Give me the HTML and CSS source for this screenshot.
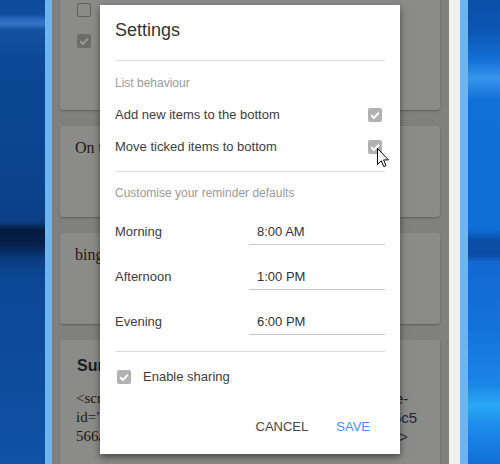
FILE: index.html
```html
<!DOCTYPE html>
<html lang="en">
<head>
<meta charset="utf-8">
<title>Settings</title>
<link rel="stylesheet" href="styles.css">
</head>
<body>
<div class="desk">
  <div class="wall wall-left"></div>
  <div class="edge"></div>
  <main class="app">
    <div class="cards">
      <section class="card card-list">
        <div class="todo"><span class="tick"></span></div>
        <div class="todo"><span class="tick done"><svg viewBox="0 0 14 14"><path d="M3.2 7.3 L5.9 10 L10.9 4.6" fill="none" stroke="#9a9a98" stroke-width="2"/></svg></span></div>
      </section>
      <section class="card card-note"><p>On the way home</p></section>
      <section class="card card-note"><p>bing search</p></section>
      <section class="card card-code">
        <h3>Surf links</h3>
        <div class="code-line"><span class="code-left">&lt;script async src</span><span class="code-right r1">e-</span></div>
        <div class="code-line"><span class="code-left">id="a51b</span><span class="code-right r2">5c5</span></div>
        <div class="code-line"><span class="code-left">566a07</span><span class="code-right r3">&gt;</span></div>
      </section>
    </div>
  </main>
  <div class="scrollbar"></div>
  <div class="edge edge-r"></div>
  <div class="wall wall-right"></div>
</div>

<div class="dialog" role="dialog" aria-label="Settings">
  <h2 class="dialog-title">Settings</h2>
  <hr class="rule">
  <div class="section-label">List behaviour</div>
  <div class="opt-rows">
    <label class="opt-row"><span>Add new items to the bottom</span><span class="check"><svg viewBox="0 0 14 14"><path d="M3.2 7.3 L5.9 10 L10.9 4.6" fill="none" stroke="#fff" stroke-width="2"/></svg></span></label>
    <label class="opt-row"><span>Move ticked items to bottom</span><span class="check"><svg viewBox="0 0 14 14"><path d="M3.2 7.3 L5.9 10 L10.9 4.6" fill="none" stroke="#fff" stroke-width="2"/></svg></span></label>
  </div>
  <hr class="rule rule-mid">
  <div class="section-label label-2">Customise your reminder defaults</div>
  <div class="times">
    <div class="time-row"><span class="time-label">Morning</span><span class="time-input">8:00 AM</span></div>
    <div class="time-row"><span class="time-label">Afternoon</span><span class="time-input">1:00 PM</span></div>
    <div class="time-row"><span class="time-label">Evening</span><span class="time-input">6:00 PM</span></div>
  </div>
  <hr class="rule rule-low">
  <label class="share-row"><span class="check"><svg viewBox="0 0 14 14"><path d="M3.2 7.3 L5.9 10 L10.9 4.6" fill="none" stroke="#fff" stroke-width="2"/></svg></span><span>Enable sharing</span></label>
  <div class="actions">
    <button class="btn">CANCEL</button>
    <button class="btn btn-primary">SAVE</button>
  </div>
</div>

<svg class="cursor" width="13" height="20" viewBox="0 0 13 20">
  <path d="M0.5 0.5 L0.5 16.5 L4.3 12.8 L6.8 18.6 L9 17.6 L6.6 11.9 L11.5 11.9 Z" fill="#fff" stroke="#000" stroke-width="1" stroke-linejoin="miter"/>
</svg>
</body>
</html>
```

FILE: styles.css
```css
* { box-sizing: border-box; }
html, body {
  margin: 0;
  width: 500px;
  height: 464px;
  overflow: hidden;
}
body {
  position: relative;
  font-family: "Liberation Sans", Arial, sans-serif;
  background: #80807e;
}

/* ---------- desktop + app behind the dialog ---------- */
.desk {
  display: flex;
  height: 464px;
}
.wall { flex: none; height: 100%; }
.wall-left {
  width: 45px;
  background: linear-gradient(180deg,
    #0e4b9c 0px, #0f4e9f 14px, #2a6cc0 20px, #3574c6 24px, #13529f 30px,
    #0c4895 60px, #0b4591 150px, #0a3f86 222px, #041a3e 230px, #05214c 245px,
    #0a3a7c 258px, #0c4794 275px, #0d4b9b 360px, #0f52a6 464px);
}
.edge { flex: none; width: 7px; background: #6cb5ee; }
.edge-r { width: 8px; }
.app {
  flex: none;
  width: 397px;
  padding-left: 8px;
  background: #80807e;
  overflow: hidden;
}
.scrollbar { flex: none; width: 11px; background: #eff1ef; }
.wall-right {
  width: 32px;
  background: linear-gradient(180deg,
    #0b4fa8 0px, #0c56b2 30px, #1270d6 60px, #3796ec 78px, #2a88e6 86px,
    #1170d8 100px, #0f6dd6 230px, #0b4ea6 240px, #0c4ea6 255px, #1169d0 262px,
    #1373da 330px, #1a86e6 385px, #2aa8f6 405px, #1d8ceb 425px, #136fd8 464px);
}

.cards {
  width: 380px;
  margin-top: -40px;
  display: flex;
  flex-direction: column;
  gap: 16px;
}
.card {
  background: #8b8b89;
  border-radius: 3px;
  box-shadow: 0 1px 2px rgba(0, 0, 0, 0.28);
}
.card-list {
  height: 150px;
  padding: 43px 0 0 17px;
  display: flex;
  flex-direction: column;
  gap: 17px;
}
.todo { height: 14px; display: flex; }
.tick {
  width: 14px;
  height: 14px;
  border: 1.5px solid #5f5f5d;
  border-radius: 2px;
}
.tick.done {
  border: none;
  background: #6d6d6b;
}
.tick svg, .check svg { display: block; width: 14px; height: 14px; }

/* card texts are clipped where the dialog covers them */
.card-note {
  height: 91px;
  padding: 12px 15px 0;
}
.card-note p {
  width: 25px;
  margin: 0;
  overflow: hidden;
  font-family: "Liberation Serif", "Times New Roman", serif;
  font-size: 16px;
  line-height: 20px;
  color: #23180f;
  white-space: nowrap;
}
.card-code {
  height: 160px;
  padding: 16px 0 0 16px;
}
.card-code h3 {
  width: 23px;
  margin: 0 0 13px 1px;
  overflow: hidden;
  white-space: nowrap;
  font-size: 16px;
  line-height: 20px;
  font-weight: bold;
  color: #1c1c1c;
}
.code-line {
  display: flex;
  height: 19px;
  line-height: 19px;
  white-space: nowrap;
}
.code-left {
  width: 24px;
  font-family: "Liberation Serif", "Times New Roman", serif;
  font-size: 15px;
  color: #23180f;
  overflow: hidden;
}
.code-right {
  font-size: 15px;
  color: #23233a;
}
.r1 { margin-left: 295px; }
.r2 { margin-left: 293px; }
.r3 { margin-left: 299px; }

/* ---------- dialog ---------- */
.dialog {
  position: absolute;
  left: 100px;
  top: 5px;
  width: 300px;
  height: 449px;
  padding: 0 15px;
  background: #fff;
  box-shadow: 0 3px 7px rgba(0, 0, 0, 0.5);
  color: #3d3d3d;
}
.dialog-title {
  margin: 13px 0 18px;
  font-size: 18px;
  line-height: 24px;
  font-weight: normal;
  color: #333;
}
.rule {
  margin: 0;
  border: none;
  border-top: 1px solid #dcdcdc;
}
.section-label {
  margin-top: 14px;
  font-size: 12px;
  line-height: 16px;
  color: #9a9a9a;
}
.label-2 { margin-top: 13px; }
.opt-rows { margin-top: 8px; }
.opt-row {
  display: flex;
  align-items: center;
  justify-content: space-between;
  height: 32px;
  font-size: 13px;
  line-height: 32px;
}
.check {
  width: 14px;
  height: 14px;
  margin-right: 3px;
  border-radius: 2px;
  background: #b1b1b1;
}
.rule-mid { margin-top: 8px; }

.times {
  margin-top: 21px;
  display: flex;
  flex-direction: column;
  gap: 22px;
}
.time-row {
  display: flex;
  align-items: flex-end;
  font-size: 13px;
  line-height: 20px;
}
.time-label {
  width: 134px;
  padding-bottom: 3px;
}
.time-input {
  width: 136px;
  padding: 0 0 2px 8px;
  border-bottom: 1px solid #c8c8c8;
  color: #333;
}
.rule-low { margin-top: 16px; }

.share-row {
  display: flex;
  align-items: center;
  margin-top: 15px;
  padding-left: 2px;
  font-size: 13px;
  line-height: 20px;
}
.share-row .check { margin-right: 12px; }

.actions {
  display: flex;
  justify-content: flex-end;
  margin-top: 22px;
}
.btn {
  padding: 0 14px;
  border: none;
  background: none;
  font-family: "Liberation Sans", Arial, sans-serif;
  font-size: 13px;
  line-height: 36px;
  color: #444;
}
.btn-primary { color: #4b8ef2; margin-right: 1px; }

.cursor {
  position: absolute;
  left: 377px;
  top: 148px;
}
```
